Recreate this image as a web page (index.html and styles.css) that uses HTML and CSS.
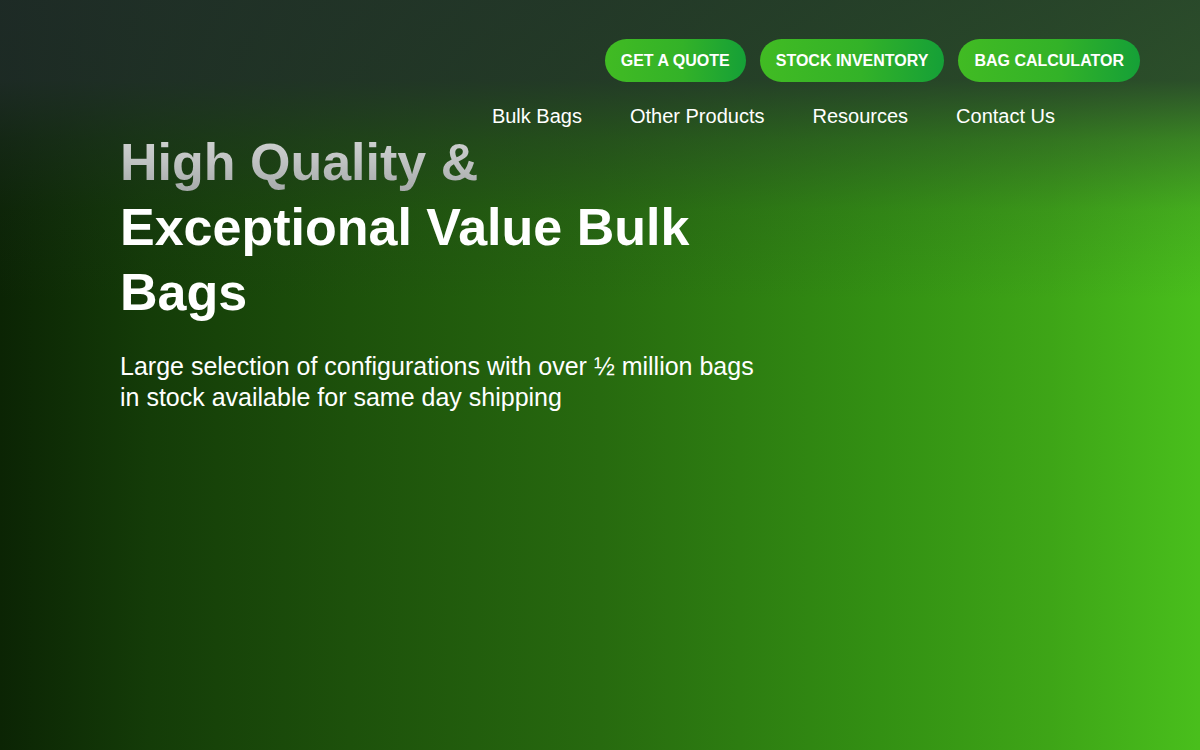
FILE: index.html
```html
<!DOCTYPE html>
<html lang="en">
<head>
<meta charset="utf-8">
<title>Bulk Bags</title>
<link rel="stylesheet" href="styles.css">
</head>
<body>
<div class="page">
  <header class="header">
    <div class="actions">
      <a class="pill" href="#">GET A QUOTE</a>
      <a class="pill" href="#">STOCK INVENTORY</a>
      <a class="pill" href="#">BAG CALCULATOR</a>
    </div>
    <nav class="nav">
      <a href="#">Bulk Bags</a>
      <a href="#">Other Products</a>
      <a href="#">Resources</a>
      <a href="#">Contact Us</a>
    </nav>
  </header>
  <section class="hero">
    <h1 class="title"><span class="title-muted">High Quality &amp;</span><br>Exceptional Value Bulk<br>Bags</h1>
    <p class="lead">Large selection of configurations with over ½ million bags<br>in stock available for same day shipping</p>
  </section>
</div>
</body>
</html>
```
FILE: styles.css
```css
html, body {
  margin: 0;
  padding: 0;
}
body {
  font-family: "Liberation Sans", Arial, sans-serif;
  color: #fff;
}
.page {
  width: 1200px;
  height: 750px;
  overflow: hidden;
  background:
    linear-gradient(to bottom, rgba(34, 44, 46, 0.8) 0px, rgba(34, 44, 46, 0.76) 80px, rgba(34, 44, 46, 0.4) 140px, rgba(34, 44, 46, 0.12) 210px, rgba(34, 44, 46, 0) 300px),
    linear-gradient(to right, #0b2404 0px, #143c08 150px, #1d510b 350px, #276a0f 600px, #339013 880px, #3ea517 1050px, #49bf1c 1200px);
}
.header {
  padding: 39px 60px 0 0;
  display: flex;
  flex-direction: column;
  align-items: flex-end;
}
.actions {
  display: flex;
  gap: 14px;
}
.pill {
  display: block;
  padding: 12px 16px;
  border-radius: 22px;
  background: linear-gradient(90deg, #41bb23 0%, #33b228 55%, #15a037 100%);
  color: #fff;
  font-weight: 700;
  font-size: 16px;
  line-height: 19px;
  text-decoration: none;
  white-space: nowrap;
}
.nav {
  display: flex;
  gap: 48px;
  margin-top: 23px;
  margin-right: 85px;
}
.nav a {
  color: #fff;
  font-size: 20px;
  line-height: 23px;
  text-decoration: none;
}
.hero {
  padding: 2px 0 0 120px;
}
.title {
  margin: 0;
  font-size: 52px;
  line-height: 65px;
  font-weight: 700;
  color: #fff;
}
.title-muted {
  background: linear-gradient(to bottom, #d2d4d4 0%, #bfc2c2 50%, #a6aaaa 100%);
  -webkit-background-clip: text;
  background-clip: text;
  color: transparent;
}
.lead {
  margin: 26px 0 0;
  font-size: 25px;
  line-height: 31px;
}
```
